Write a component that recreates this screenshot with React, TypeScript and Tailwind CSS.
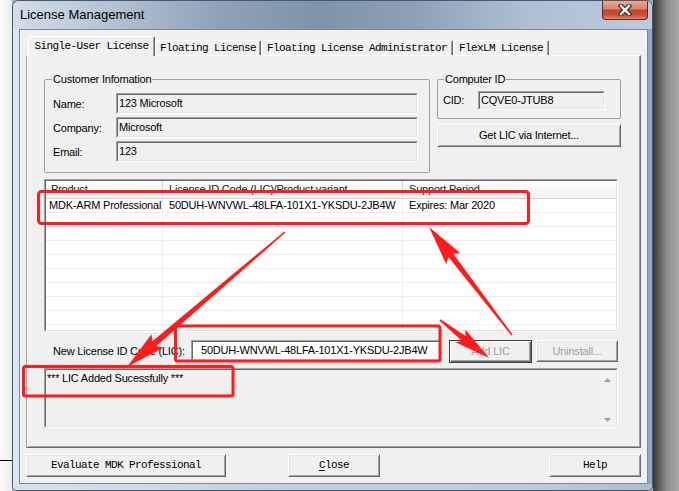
import React from 'react';

type Pt = [number, number];

const sans = "font-['Liberation_Sans',Arial,sans-serif] text-[11px] tracking-[-0.2px] text-black";
const mono = "font-['Liberation_Mono','Courier_New',monospace] text-[11px] tracking-[-0.6px] text-black";
const raised =
  'bg-[#f0f0f0] border border-t-white border-l-white border-r-[#696969] border-b-[#696969] shadow-[inset_1px_1px_0_#e3e3e3,inset_-1px_-1px_0_#a0a0a0]';

// tapered arrow like the ones drawn by screenshot tools
const arrow = (tail: Pt, tip: Pt, head = 34, headHalf = 9, tailHalf = 0.8, neckHalf = 3) => {
  const dx = tip[0] - tail[0];
  const dy = tip[1] - tail[1];
  const len = Math.hypot(dx, dy);
  const ux = dx / len;
  const uy = dy / len;
  const nx = -uy;
  const ny = ux;
  const bx = tip[0] - ux * head;
  const by = tip[1] - uy * head;
  const pts: Pt[] = [
    [tail[0] + nx * tailHalf, tail[1] + ny * tailHalf],
    [bx + nx * neckHalf, by + ny * neckHalf],
    [bx - ux * 4 + nx * headHalf, by - uy * 4 + ny * headHalf],
    tip,
    [bx - ux * 4 - nx * headHalf, by - uy * 4 - ny * headHalf],
    [bx - nx * neckHalf, by - ny * neckHalf],
    [tail[0] - nx * tailHalf, tail[1] - ny * tailHalf],
  ];
  return pts.map((p) => p.join(',')).join(' ');
};

const Sunken = ({
  className = '',
  inner = '',
  children,
}: {
  className?: string;
  inner?: string;
  children?: React.ReactNode;
}) => (
  <div className={`border border-t-[#a0a0a0] border-l-[#a0a0a0] border-r-white border-b-white ${className}`}>
    <div
      className={`h-full w-full border border-t-[#696969] border-l-[#696969] border-r-[#e3e3e3] border-b-[#e3e3e3] ${inner}`}
    >
      {children}
    </div>
  </div>
);

const Field = ({ label, value }: { label: string; value: string }) => (
  <div className="flex items-center h-[21px]">
    <span className="w-[63px] pt-[2px]">{label}</span>
    <Sunken className="w-[302px] h-[21px]" inner="bg-[#f0f0f0] flex items-center pl-[1px] pb-[1px]">
      {value}
    </Sunken>
  </div>
);

const otherTabs = [
  { label: 'Floating License', w: 'w-[106px]' },
  { label: 'Floating License Administrator', w: 'w-[192px]' },
  { label: 'FlexLM License', w: 'w-[96px]' },
];

const rows = Array.from({ length: 10 });

export default function App() {
  return (
    <div className="relative w-[679px] h-[491px] overflow-hidden flex bg-[#a9a9a9]">
      {/* Background window on the left */}
      <div className="w-[12px] h-full flex flex-col bg-[linear-gradient(to_right,#fafafa,#ececec)]">
        <div className="h-[460px]" />
        <div className="h-[1px] bg-black" />
      </div>

      {/* Dialog window */}
      <div className="w-[641px] h-[491px] flex flex-col rounded-t-[7px] rounded-b-[5px] border border-[#4b5868] bg-[linear-gradient(to_right,#dde7f3_0%,#c4d2e2_10%,#9aadc4_30%,#8a9eb7_50%,#a2b5ca_75%,#8ea6c1_100%)] overflow-hidden">
        {/* Title bar */}
        <div className="h-[28px] flex justify-between items-start bg-[linear-gradient(to_right,#d3dde9_0%,#b4c3d4_15%,#8fa2b9_32%,#7f93ac_48%,#8c9fb6_62%,#aebfd2_80%,#bccbdc_100%)]">
          <span className="pl-[7px] leading-[28px] text-[13px] font-['Liberation_Sans',Arial,sans-serif] text-black">
            License Management
          </span>
          <div className="-mt-[1px] mr-[4px] w-[46px] h-[20px] rounded-b-[4px] border border-[#6a2418] border-t-0 bg-[linear-gradient(to_bottom,#eab0a1,#d98670_45%,#c2452d_55%,#c85239_80%,#de8a6c)] flex items-center justify-center">
            <svg width="14" height="12" viewBox="0 0 14 12">
              <path d="M3 2 L11 10 M11 2 L3 10" stroke="#3a2a28" strokeWidth="4.6" strokeLinecap="square" />
              <path d="M3 2 L11 10 M11 2 L3 10" stroke="#ffffff" strokeWidth="2.4" strokeLinecap="square" />
            </svg>
          </div>
        </div>

        {/* Client area with side frames */}
        <div className="flex pl-[6px] pr-[4px]">
          <div className="w-[629px] h-[455px] border border-[#7c8898] bg-[#f0f0f0] pt-[6px] pl-[6px]">
            {/* Tabs */}
            <div className={`flex items-end h-[19px] pl-[2px] ${mono}`}>
              <div className="relative z-10 w-[127px] h-[20px] -mb-[1px] bg-[#f0f0f0] rounded-t-[2px] border border-b-0 border-t-white border-l-white border-r-[#696969] shadow-[inset_-1px_0_0_#a0a0a0] flex items-center justify-center">
                Single-User License
              </div>
              {otherTabs.map((t) => (
                <div
                  key={t.label}
                  className={`${t.w} h-[15px] rounded-t-[2px] border border-b-0 border-t-white border-l-white border-r-[#696969] shadow-[inset_-1px_0_0_#a0a0a0] flex items-center justify-center`}
                >
                  {t.label}
                </div>
              ))}
            </div>

            {/* Tab panel */}
            <div
              className={`w-[615px] h-[393px] border border-t-white border-l-[#a0a0a0] border-r-[#696969] border-b-[#696969] shadow-[inset_1px_0_0_#fff,inset_-1px_-1px_0_#a0a0a0] pl-[17px] pt-[17px] ${sans}`}
            >
              <div className="flex gap-[7px] items-start">
                <fieldset className="w-[386px] border border-[#a0a0a0] rounded-[2px] pl-[8px] pr-[11px] pt-[8px] pb-[10px]">
                  <legend className="leading-[12px] -ml-[1px] px-[1px]">Customer Infomation</legend>
                  <div className="flex flex-col gap-[3px]">
                    <Field label="Name:" value="123 Microsoft" />
                    <Field label="Company:" value="Microsoft" />
                    <Field label="Email:" value="123" />
                  </div>
                </fieldset>

                <div className="flex flex-col w-[184px]">
                  <fieldset className="w-[184px] border border-[#a0a0a0] rounded-[2px] pl-[5px] pr-[15px] pt-[6px] pb-[8px]">
                    <legend className="leading-[12px] ml-[1px] px-[1px]">Computer ID</legend>
                    <div className="flex items-center h-[19px]">
                      <span className="w-[35px]">CID:</span>
                      <Sunken className="w-[127px] h-[19px]" inner="bg-[#f0f0f0] flex items-center pl-[1px]">
                        CQVE0-JTUB8
                      </Sunken>
                    </div>
                  </fieldset>
                  <div className={`mt-[5px] w-[184px] h-[23px] flex items-center justify-center ${raised}`}>
                    Get LIC via Internet...
                  </div>
                </div>
              </div>

              {/* License list */}
              <Sunken className="mt-[6px] w-[574px] h-[153px]" inner="bg-white overflow-hidden">
                <div className="flex h-[18px] border-b border-[#d5d5d5] bg-linear-to-b from-white to-[#f1f1f1] text-[#1a1a1a]">
                  <div className="w-[117px] pl-[5px] border-r border-[#d5d5d5] flex items-center">Product</div>
                  <div className="w-[240px] pl-[6px] border-r border-[#d5d5d5] flex items-center">
                    License ID Code (LIC)/Product variant
                  </div>
                  <div className="flex-1 pl-[6px] flex items-center">Support Period</div>
                </div>
                {rows.map((_, i) => (
                  <div key={i} className="flex h-[14px] border-b border-[#ececec] leading-[13px]">
                    <div className="w-[117px] pl-[3px] border-r border-[#ececec] whitespace-nowrap">
                      {i === 0 ? 'MDK-ARM Professional' : ''}
                    </div>
                    <div className="w-[240px] pl-[6px] border-r border-[#ececec] whitespace-nowrap">
                      {i === 0 ? '50DUH-WNVWL-48LFA-101X1-YKSDU-2JB4W' : ''}
                    </div>
                    <div className="flex-1 pl-[6px] whitespace-nowrap">{i === 0 ? 'Expires: Mar 2020' : ''}</div>
                  </div>
                ))}
              </Sunken>

              {/* New LIC row */}
              <div className="mt-[8px] flex items-start h-[23px]">
                <span className="ml-[9px] w-[138px] leading-[21px] pt-[1px] whitespace-nowrap">
                  New License ID Code (LIC):
                </span>
                <Sunken className="w-[250px] h-[21px]" inner="bg-white flex items-center pl-[8px]">
                  50DUH-WNVWL-48LFA-101X1-YKSDU-2JB4W
                </Sunken>
                <div className="ml-[8px] w-[83px] h-[23px] border border-[#3c3c3c] bg-[#f0f0f0] shadow-[inset_1px_1px_0_#fff,inset_-1px_-1px_0_#696969,inset_-2px_-2px_0_#a0a0a0] flex items-center justify-center text-[#a0a0a0]">
                  Add LIC
                </div>
                <div className={`ml-[4px] w-[82px] h-[22px] flex items-center justify-center text-[#a0a0a0] ${raised}`}>
                  Uninstall...
                </div>
              </div>

              {/* Output box */}
              <Sunken className="mt-[5px] w-[574px] h-[60px]" inner="bg-[#f0f0f0] flex">
                <div className="flex-1 pl-[1px] pt-[1px] leading-[14px]">*** LIC Added Sucessfully ***</div>
                <div className="w-[17px] flex flex-col items-center justify-between pt-[8px] pb-[4px] bg-[#f2f2f2]">
                  <svg width="7" height="4" viewBox="0 0 7 4">
                    <polygon points="3.5,0 7,4 0,4" fill="#a3a3a3" />
                  </svg>
                  <svg width="7" height="4" viewBox="0 0 7 4">
                    <polygon points="0,0 7,0 3.5,4" fill="#a3a3a3" />
                  </svg>
                </div>
              </Sunken>
            </div>

            {/* Bottom buttons */}
            <div className={`mt-[6px] w-[615px] flex ${mono}`}>
              <div className={`w-[200px] h-[23px] flex items-center justify-center ${raised}`}>Evaluate MDK Professional</div>
              <div className={`ml-[62px] w-[92px] h-[23px] flex items-center justify-center ${raised}`}>
                <span>
                  <span className="underline underline-offset-2">C</span>lose
                </span>
              </div>
              <div className={`ml-auto w-[92px] h-[23px] flex items-center justify-center ${raised}`}>Help</div>
            </div>
          </div>
        </div>

        <div className="flex-1 bg-[linear-gradient(to_right,#d6e2ef,#c2d2e4_40%,#bccde0_80%,#a9bdd3)]" />
      </div>

      {/* Desktop shadow on the right */}
      <div className="w-[26px] h-full bg-[linear-gradient(to_right,#2e343b,#5e5e5e_22%,#8f8f8f_55%,#a9a9a9)]" />

      {/* Red annotations */}
      <svg className="absolute inset-0 pointer-events-none" width="679" height="491" viewBox="0 0 679 491">
        <g fill="none" stroke="#ff1c1c" strokeWidth="3">
          <rect x="38.5" y="191.5" width="490" height="32" rx="3" />
          <rect x="175.5" y="326" width="264.5" height="35" rx="2" />
          <rect x="23.5" y="366.5" width="209.5" height="29.5" rx="2" />
        </g>
        <g fill="#ff1c1c">
          <polygon points={arrow([285, 232], [127, 367], 36, 9, 0.8, 3)} />
          <polygon points={arrow([512, 335], [429, 227], 36, 9, 0.8, 3)} />
          <polygon points={arrow([440, 320], [489, 358], 32, 8, 0.8, 3)} />
        </g>
      </svg>
    </div>
  );
}
